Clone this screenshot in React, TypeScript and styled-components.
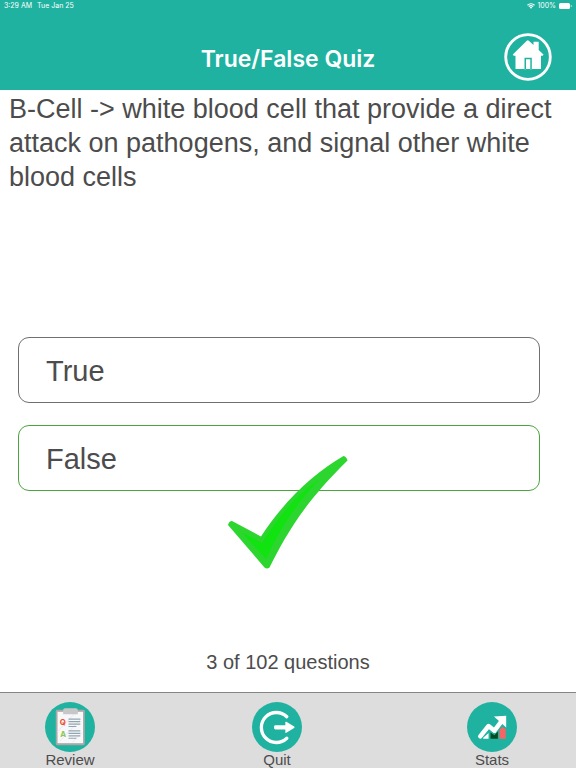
import React from "react";
import styled, { createGlobalStyle } from "styled-components";

const GlobalStyle = createGlobalStyle`
  *, *::before, *::after { box-sizing: border-box; }
  body {
    margin: 0;
    background: #ffffff;
    color: #4c4c4c;
    font-family: "Liberation Sans", Arial, sans-serif;
  }
  button { font-family: inherit; color: inherit; cursor: pointer; }
`;

const Page = styled.div`
  min-height: 100vh;
  display: flex;
  flex-direction: column;
`;

const Header = styled.header`
  height: 90px;
  display: flex;
  flex-direction: column;
  background: #20b2a0;
  color: #ffffff;
  font-family: Inter, "Liberation Sans", sans-serif;
`;

const StatusBar = styled.div`
  height: 12px;
  padding: 0 4px;
  display: flex;
  justify-content: space-between;
  font-size: 7px;
  line-height: 12px;
`;

const StatusGroup = styled.div<{ $gap: number }>`
  display: flex;
  align-items: center;
  gap: ${({ $gap }) => $gap}px;
`;

const TitleBar = styled.div`
  flex: 1;
  padding: 12px 24px 0;
  display: grid;
  grid-template-columns: 48px 1fr 48px;
  align-items: start;
`;

const Title = styled.h1`
  grid-column: 2;
  margin: 0;
  text-align: center;
  font-size: 23px;
  font-weight: 600;
  line-height: 70px;
`;

const HomeButton = styled.button`
  width: 48px;
  height: 48px;
  margin-top: 9px;
  padding: 0;
  border: 0;
  background: none;

  svg { display: block; }
`;

const Main = styled.main`
  flex: 1;
  display: flex;
  flex-direction: column;
`;

const Question = styled.p`
  min-height: 247px;
  margin: 0;
  padding: 2px 9px 0;
  font-size: 27px;
  line-height: 34px;
`;

const Answers = styled.div`
  padding: 0 36px 0 18px;
  display: flex;
  flex-direction: column;
  gap: 22px;
`;

const AnswerSlot = styled.div`
  position: relative;
`;

const Answer = styled.button<{ $correct?: boolean }>`
  display: block;
  width: 100%;
  height: 66px;
  padding: 2px 27px 0;
  border: 1px solid ${({ $correct }) => ($correct ? "#4ba53f" : "#707070")};
  border-radius: 11px;
  background: #ffffff;
  text-align: left;
  font-size: 29px;
`;

const CheckMark = styled.svg`
  position: absolute;
  top: 31px;
  left: 50%;
  margin-left: -51px;
  pointer-events: none;
`;

const Progress = styled.p`
  margin: auto 0 16px;
  text-align: center;
  font-size: 20px;
  line-height: 28px;
`;

const TabBar = styled.nav`
  height: 76px;
  padding: 9px 6px 0 0;
  display: grid;
  grid-template-columns: 140fr 274fr 156fr;
  justify-items: center;
  align-items: start;
  border-top: 1px solid #858585;
  background: #dddddd;
`;

const Tab = styled.button`
  padding: 0;
  border: 0;
  background: none;
  display: flex;
  flex-direction: column;
  align-items: center;
  font-size: 15px;
  line-height: 15px;

  svg { display: block; }
`;

const WifiIcon = () => (
  <svg width="8" height="6" viewBox="0 0 16 12" fill="none" stroke="#fff" strokeWidth="2.4" aria-hidden="true">
    <path d="M1 4.5C5 .7 11 .7 15 4.5M3.7 7.3c2.5-2.3 6.1-2.3 8.6 0" />
    <path d="M8 11.5 5.500 9c1.500-1.200 3.500-1.200 5 0z" fill="#fff" stroke="none" />
  </svg>
);

const BatteryIcon = () => (
  <svg width="14" height="6" viewBox="0 0 14 6" aria-hidden="true">
    <rect x="1" width="11" height="6" rx="1.5" fill="#fff" />
    <path d="M12.8 2v2q1-.2 1-1t-1-1z" fill="#d5f0ec" />
  </svg>
);

const HomeIcon = () => (
  <svg width="48" height="48" viewBox="0 0 48 48" aria-hidden="true">
    <circle cx="24" cy="24" r="22.3" fill="none" stroke="#fff" strokeWidth="2.8" />
    <path
      fill="#fff"
      fillRule="evenodd"
      d="M22.800 7.700q1-1 2 0L29.500 12V8.700h5.200v8.300l4.800 4.500-.8 1.200H37v13.300H11.500V22.700H9.600l-.8-1.200zM20.500 24.700v11.500h7.300V24.700zM22 26.200h4.300v10H22z"
    />
  </svg>
);

const ReviewIcon = () => (
  <svg width="50" height="50" viewBox="0 0 51 51" aria-hidden="true">
    <circle cx="25.5" cy="25.5" r="25.5" fill="#20b2a0" />
    <rect x="11" y="8" width="29.6" height="36" rx="1.5" fill="#aaa9a8" />
    <path d="M12.800 10h26v32h-26z" fill="#f8f8fa" />
    <path d="m13 30 18-19M15 40l22-23M28 41l10-10" stroke="#e8e8ee" strokeWidth="1" />
    <path d="M18.500 8.500q0-2 2-2h11q2 0 2 2v4h-15z" fill="#c8c7c7" />
    <g fontFamily="Inter, sans-serif" fontSize="8" fontWeight="700">
      <text x="15" y="23.500" fill="#ee4e28">Q</text>
      <text x="15.500" y="35.500" fill="#8cc653">A</text>
    </g>
    <path
      d="M24 17.500h12M24 20h12M24 22.500h12M24 25h8M24 29.500h12M24 32h12M24 34.500h12M24 37h8"
      stroke="#91a5b1"
      strokeWidth="1.2"
    />
  </svg>
);

const QuitIcon = () => (
  <svg width="50" height="50" viewBox="0 0 51 51" aria-hidden="true">
    <circle cx="25.5" cy="25.5" r="25.5" fill="#20b2a0" />
    <path
      d="M35.500 15A15.300 15.300 0 1 0 35.500 37"
      fill="none"
      stroke="#fff"
      strokeWidth="3.4"
      strokeLinecap="round"
    />
    <path d="M24 23.600h10v-2.900q0-1 1-.5l8 4.700q.9.800 0 1.600l-8 4.900q-1 .5-1-.5v-2.900H24q-1.500 0-1.500-1.500v-1.400q0-1.500 1.500-1.500z" fill="#fff" />
  </svg>
);

const StatsIcon = () => (
  <svg width="50" height="50" viewBox="0 0 51 51" aria-hidden="true">
    <circle cx="25.500" cy="25.500" r="25.500" fill="#20b2a0" />
    <path d="M16.500 37.500v-1l5.500-5v6z" fill="#fff" />
    <path d="M24 31 28 34l3.500-4v7.500H24z" fill="#064b20" />
    <path d="M33 28.500 36 25.500l3.500 2v10H33z" fill="#f66466" />
    <path
      d="M13.500 35 22 24.500l6 4.800 7.500-10"
      fill="none"
      stroke="#fff"
      strokeWidth="4.6"
      strokeLinecap="round"
      strokeLinejoin="round"
    />
    <path d="M27.500 14.800 40 14v12z" fill="#fff" />
  </svg>
);

export default function App() {
  return (
    <>
      <GlobalStyle />
      <Page>
        <Header>
          <StatusBar>
            <StatusGroup $gap={5}>
              <span>3:29 AM</span>
              <span>Tue Jan 25</span>
            </StatusGroup>
            <StatusGroup $gap={2}>
              <WifiIcon />
              <span>100%</span>
              <BatteryIcon />
            </StatusGroup>
          </StatusBar>
          <TitleBar>
            <Title>True/False Quiz</Title>
            <HomeButton aria-label="Home">
              <HomeIcon />
            </HomeButton>
          </TitleBar>
        </Header>
        <Main>
          <Question>
            B-Cell -&gt; white blood cell that provide a direct attack on pathogens, and signal other white blood cells
          </Question>
          <Answers>
            <Answer>True</Answer>
            <AnswerSlot>
              <Answer $correct>False</Answer>
              <CheckMark width="120" height="114" viewBox="0 0 120 114" aria-hidden="true">
                <path
                  d="M4 65Q1 65 0 69l36.500 42.500q2.500 2 5 0C57 81 74 49 119.500 4.500q-1-4-4-4.500C86 17 56 45 33 80.500z"
                  fill="#2cd62f"
                />
                <path d="M14 76.500 34 87C51 60 67 40 92 23 69 46 51 74 38 103z" fill="#10e310" />
              </CheckMark>
            </AnswerSlot>
          </Answers>
          <Progress>3 of 102 questions</Progress>
        </Main>
        <TabBar aria-label="Quiz">
          <Tab>
            <ReviewIcon />
            Review
          </Tab>
          <Tab>
            <QuitIcon />
            Quit
          </Tab>
          <Tab>
            <StatsIcon />
            Stats
          </Tab>
        </TabBar>
      </Page>
    </>
  );
}
